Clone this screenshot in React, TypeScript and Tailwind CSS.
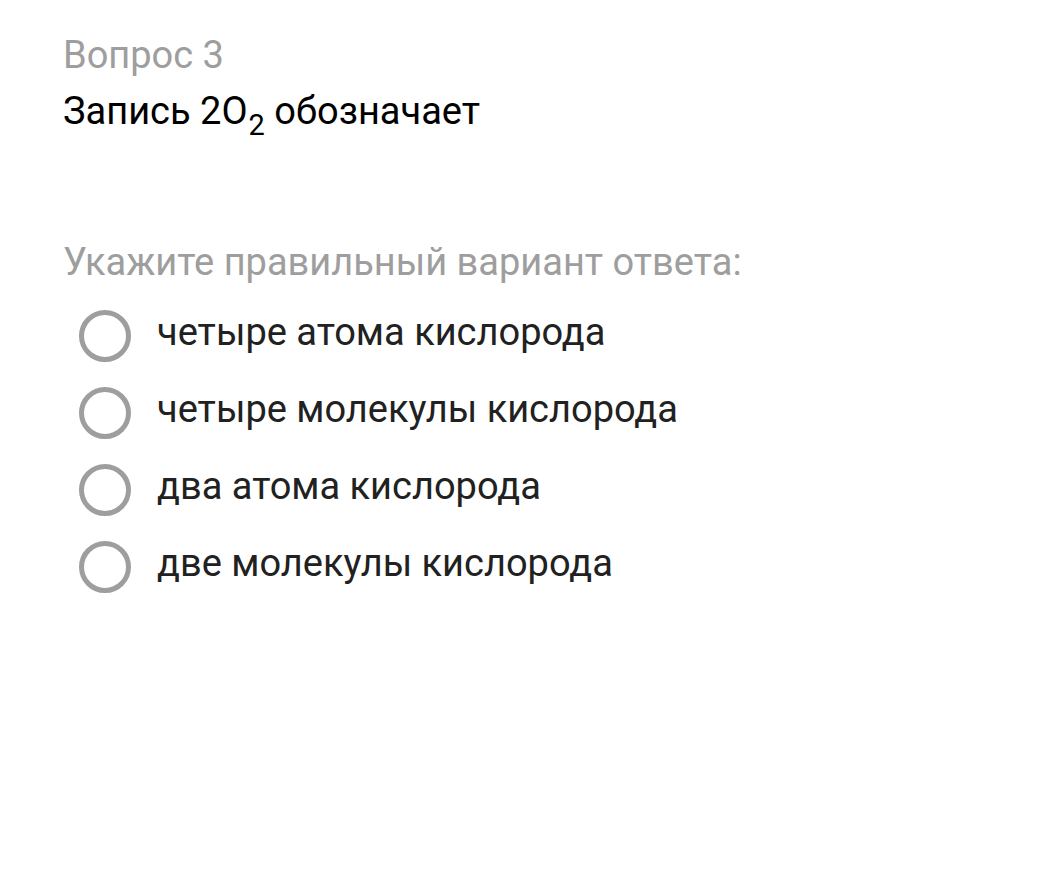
import React from 'react';

const OPTIONS = [
  'четыре атома кислорода',
  'четыре молекулы кислорода',
  'два атома кислорода',
  'две молекулы кислорода',
];

function Radio() {
  return (
    <span className="block w-[52px] h-[52px] rounded-full border-[5px] border-[#9e9e9e] shrink-0" />
  );
}

export default function App() {
  return (
    <div className="min-h-screen w-full bg-white font-['Roboto',sans-serif] pl-[63px] pt-[33px]">
      <div className="text-[38px] leading-[44px] text-[#9e9e9e]">Вопрос 3</div>
      <div className="mt-[12px] text-[38px] leading-[44px] text-black">
        Запись 2O<sub className="text-[29px] -bottom-[11px] ml-[1px]">2</sub> обозначает
      </div>

      <div className="mt-[107px] text-[38px] leading-[44px] text-[#9e9e9e]">Укажите правильный вариант ответа:</div>

      <div className="mt-[26px] flex flex-col gap-[25px] pl-[16px]">
        {OPTIONS.map((o) => (
          <div key={o} className="flex items-center gap-[26px] h-[52px]">
            <Radio />
            <span className="text-[38px] leading-[44px] text-[#212121] mb-[9px]">{o}</span>
          </div>
        ))}
      </div>
    </div>
  );
}
